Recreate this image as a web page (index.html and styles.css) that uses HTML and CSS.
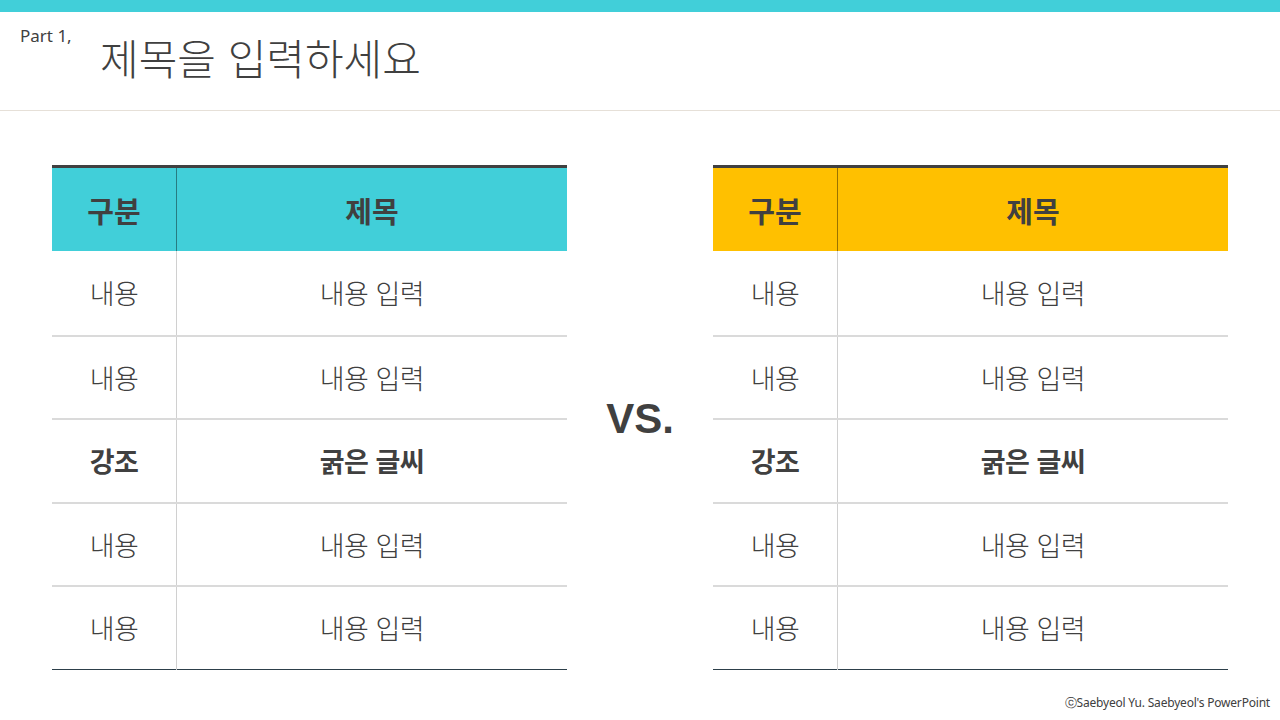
FILE: index.html
```html
<!DOCTYPE html>
<html lang="ko">
<head>
    <meta charset="UTF-8">
    <title>제목을 입력하세요</title>
    <link rel="stylesheet" href="styles.css">
</head>
<body>
    <div class="top-bar"></div>
    <header class="header">
        <span class="part">Part 1,</span>
        <h1>제목을 입력하세요</h1>
    </header>

    <main class="compare">
        <table class="cmp-table cyan">
            <thead>
                <tr><th class="col-a">구분</th><th>제목</th></tr>
            </thead>
            <tbody>
                <tr><td>내용</td><td>내용 입력</td></tr>
                <tr><td>내용</td><td>내용 입력</td></tr>
                <tr class="strong"><td>강조</td><td>굵은 글씨</td></tr>
                <tr><td>내용</td><td>내용 입력</td></tr>
                <tr><td>내용</td><td>내용 입력</td></tr>
            </tbody>
        </table>

        <div class="vs">VS.</div>

        <table class="cmp-table yellow">
            <thead>
                <tr><th class="col-a">구분</th><th>제목</th></tr>
            </thead>
            <tbody>
                <tr><td>내용</td><td>내용 입력</td></tr>
                <tr><td>내용</td><td>내용 입력</td></tr>
                <tr class="strong"><td>강조</td><td>굵은 글씨</td></tr>
                <tr><td>내용</td><td>내용 입력</td></tr>
                <tr><td>내용</td><td>내용 입력</td></tr>
            </tbody>
        </table>
    </main>

    <footer class="footer">ⓒSaebyeol Yu. Saebyeol's PowerPoint</footer>
</body>
</html>
```

FILE: styles.css
```css
body {
    margin: 0;
    padding: 0;
    width: 1280px;
    height: 720px;
    display: flex;
    flex-direction: column;
    background-color: white;
    color: #404040;
    font-family: "Noto Sans CJK KR", "Noto Sans", sans-serif;
    overflow: hidden;
}
.top-bar {
    height: 12px;
    background-color: #41cfd9;
}
.header {
    height: 98px;
    border-bottom: 1px solid #e6e0d8;
    display: flex;
    align-items: flex-start;
    padding-left: 20px;
}
.part {
    font-family: "Noto Sans", "Noto Sans CJK KR", sans-serif;
    font-size: 17px;
    margin-top: 12px;
    width: 80px;
}
.header h1 {
    margin: 14px 0 0;
    font-size: 42px;
    font-weight: 300;
}
.compare {
    display: grid;
    grid-template-columns: 515px 1fr 515px;
    align-items: start;
    padding: 54px 52px 0;
}
.cmp-table {
    width: 515px;
    border-collapse: collapse;
    border-top: 3px solid #404040;
    border-bottom: 1px solid #2d3f4a;
    table-layout: fixed;
}
.cmp-table th {
    height: 83px;
    padding: 0;
    font-size: 29px;
    font-weight: 700;
    text-align: center;
}
.cmp-table th.col-a {
    width: 124px;
    border-right: 1px solid rgba(0, 0, 0, 0.4);
}
.cyan th {
    background-color: #41cfd9;
}
.yellow th {
    background-color: #ffc000;
}
.cmp-table td {
    height: 81.5px;
    padding: 0;
    font-size: 27px;
    font-weight: 300;
    text-align: center;
    border-top: 2px solid #dadada;
    letter-spacing: -0.5px;
}
.cmp-table tbody tr:first-child td {
    border-top: none;
    height: 83.5px;
}
.cmp-table td:first-child {
    border-right: 1px solid #d0d0d0;
}
.cmp-table tr.strong td {
    font-weight: 700;
}
.vs {
    align-self: center;
    text-align: center;
    font-family: "Liberation Sans", Arial, sans-serif;
    font-size: 42px;
    font-weight: 700;
    margin-top: 4px;
}
.footer {
    margin-top: auto;
    padding: 0 10px 8px 0;
    text-align: right;
    font-family: "Noto Sans", sans-serif;
    font-size: 12px;
    letter-spacing: -0.2px;
}
```
